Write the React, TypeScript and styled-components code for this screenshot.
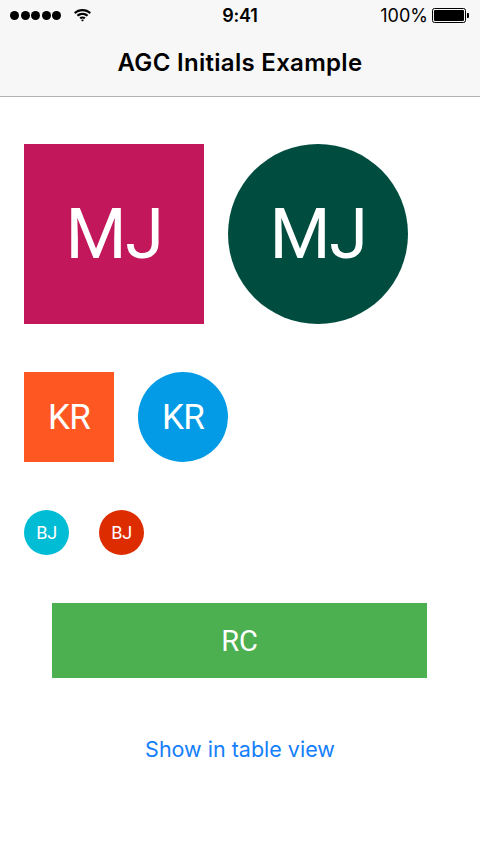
import React from "react";
import styled, { createGlobalStyle } from "styled-components";

const GlobalStyle = createGlobalStyle`
    html, body {
        margin: 0;
        padding: 0;
        background: #ffffff;
    }
    body {
        font-family: "Roboto", "Inter", "Liberation Sans", sans-serif;
        -webkit-font-smoothing: antialiased;
    }
`;

const Screen = styled.div`
    width: 480px;
    height: 852px;
    display: flex;
    flex-direction: column;
    background: #ffffff;
    overflow: hidden;
`;

// --- Header (status bar + nav bar) ---
const Header = styled.header`
    height: 96px;
    background: #f7f7f7;
    border-bottom: 1px solid #b2b2b2;
    display: flex;
    flex-direction: column;
    flex-shrink: 0;
`;

const StatusBar = styled.div`
    height: 30px;
    padding: 0 10px;
    display: grid;
    grid-template-columns: 1fr auto 1fr;
    align-items: center;
    font-family: "Inter", "Roboto", sans-serif;
    color: #000;
`;

const StatusLeft = styled.div`
    display: flex;
    align-items: center;
    gap: 12px;
`;

const SignalDots = styled.div`
    display: flex;
    gap: 1.5px;
`;

const Dot = styled.span`
    width: 9px;
    height: 9px;
    border-radius: 50%;
    background: #000;
`;

const Clock = styled.div`
    font-size: 18px;
    font-weight: 600;
    letter-spacing: -0.2px;
`;

const StatusRight = styled.div`
    display: flex;
    align-items: center;
    justify-content: flex-end;
    gap: 4px;
    font-size: 18px;
    font-weight: 400;
    padding-right: 1px;
`;

const Battery = styled.div`
    display: flex;
    align-items: center;
`;

const BatteryBody = styled.div`
    width: 30px;
    height: 11px;
    border: 1px solid #000;
    border-radius: 2.5px;
    padding: 1px;
    box-sizing: content-box;
    display: flex;
`;

const BatteryFill = styled.div`
    flex: 1;
    background: #000;
    border-radius: 1px;
`;

const BatteryNub = styled.div`
    width: 2px;
    height: 5px;
    background: #000;
    border-radius: 0 1px 1px 0;
    margin-left: 1px;
`;

const NavBar = styled.div`
    flex: 1;
    display: flex;
    align-items: center;
    justify-content: center;
    padding-bottom: 2px;
`;

const NavTitle = styled.h1`
    margin: 0;
    font-family: "Inter", "Roboto", sans-serif;
    font-size: 24px;
    font-weight: 600;
    letter-spacing: 0.3px;
    color: #000;
`;

// --- Content ---
const Content = styled.main`
    flex: 1;
    display: flex;
    flex-direction: column;
    padding: 47px 0 0;
`;

const AvatarRow = styled.div<{ $gap: number }>`
    display: flex;
    gap: ${({ $gap }) => $gap}px;
    padding-left: 24px;
    margin-bottom: 48px;
`;

const Avatar = styled.div<{ $size: number; $bg: string; $round?: boolean; $font: number }>`
    width: ${({ $size }) => $size}px;
    height: ${({ $size }) => $size}px;
    background: ${({ $bg }) => $bg};
    border-radius: ${({ $round }) => ($round ? "50%" : "0")};
    color: #ffffff;
    font-size: ${({ $font }) => $font}px;
    font-weight: 400;
    display: flex;
    align-items: center;
    justify-content: center;
    flex-shrink: 0;
    letter-spacing: -0.02em;
`;

const WideAvatar = styled.div`
    margin-left: 52px;
    width: 375px;
    height: 75px;
    background: #4caf50;
    color: #ffffff;
    font-size: 29px;
    display: flex;
    align-items: center;
    justify-content: center;
`;

const LinkButton = styled.button`
    align-self: center;
    margin-top: 56px;
    background: none;
    border: none;
    padding: 0;
    font-family: "Inter", "Roboto", sans-serif;
    font-size: 21.5px;
    line-height: 30px;
    color: #147efb;
    cursor: pointer;
`;

const Wifi: React.FC = () => (
    <svg width="19" height="14" viewBox="0 0 19 14">
        <path d="M9.5 3.2c2.7 0 5.1 1 7 2.7l1.5-1.6C15.7 2.2 12.8 1 9.5 1S3.3 2.2 1 4.3l1.5 1.6c1.9-1.7 4.300-2.7 7-2.7z" fill="#000" />
        <path d="M9.5 7c1.6 0 3.1.6 4.3 1.6l1.5-1.6C13.7 5.6 11.7 4.8 9.5 4.8S5.3 5.6 3.700 7l1.5 1.6C6.4 7.6 7.9 7 9.5 7z" fill="#000" />
        <path d="M9.5 10.6c.6 0 1.2.2 1.6.6l1.5-1.6c-.8-.7-1.9-1.1-3.1-1.1s-2.3.4-3.1 1.1l1.5 1.6c.4-.4 1-.6 1.6-.6z" fill="#000" />
        <path d="M9.5 13.6l1.5-1.6c-.4-.3-.9-.5-1.5-.5s-1.1.2-1.5.5z" fill="#000" />
    </svg>
);

const App: React.FC = () => {
    return (
        <>
            <GlobalStyle />
            <Screen>
                <Header>
                    <StatusBar>
                        <StatusLeft>
                            <SignalDots>
                                {[0, 1, 2, 3, 4].map((i) => (
                                    <Dot key={i} />
                                ))}
                            </SignalDots>
                            <Wifi />
                        </StatusLeft>
                        <Clock>9:41</Clock>
                        <StatusRight>
                            100%
                            <Battery>
                                <BatteryBody>
                                    <BatteryFill />
                                </BatteryBody>
                                <BatteryNub />
                            </Battery>
                        </StatusRight>
                    </StatusBar>
                    <NavBar>
                        <NavTitle>AGC Initials Example</NavTitle>
                    </NavBar>
                </Header>
                <Content>
                    <AvatarRow $gap={24}>
                        <Avatar $size={180} $bg="#c2185b" $font={70}>MJ</Avatar>
                        <Avatar $size={180} $bg="#004d40" $font={70} $round>MJ</Avatar>
                    </AvatarRow>
                    <AvatarRow $gap={24}>
                        <Avatar $size={90} $bg="#ff5722" $font={35}>KR</Avatar>
                        <Avatar $size={90} $bg="#039be5" $font={35} $round>KR</Avatar>
                    </AvatarRow>
                    <AvatarRow $gap={30}>
                        <Avatar $size={45} $bg="#00bcd4" $font={18} $round>BJ</Avatar>
                        <Avatar $size={45} $bg="#dd2c00" $font={18} $round>BJ</Avatar>
                    </AvatarRow>
                    <WideAvatar>RC</WideAvatar>
                    <LinkButton>Show in table view</LinkButton>
                </Content>
            </Screen>
        </>
    );
};

export default App;
